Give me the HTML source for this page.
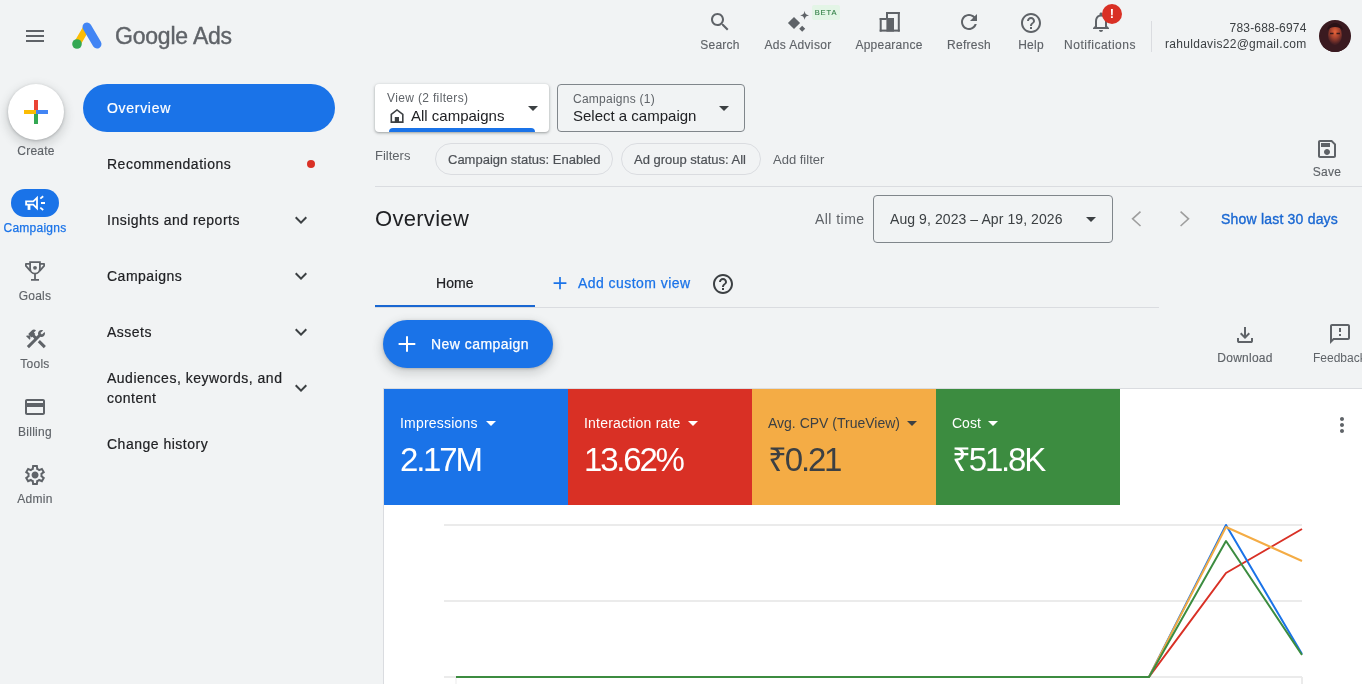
<!DOCTYPE html>
<html><head><meta charset="utf-8">
<style>
*{box-sizing:border-box;margin:0;padding:0}
html,body{width:1362px;height:684px;overflow:hidden;background:#f1f3f4;font-family:"Liberation Sans",sans-serif;color:#202124}
.a{position:absolute;white-space:nowrap}
.t12{font-size:12px;line-height:16px}
.t13{font-size:13px;line-height:16px}
.t14{font-size:14px;line-height:20px}
.t15{font-size:15px;line-height:20px}
.g{color:#5f6368}
svg{position:absolute;display:block}
.lbl{text-align:center;color:#5f6368;letter-spacing:.25px;-webkit-text-stroke:.15px currentColor}
.m{-webkit-text-stroke:.35px currentColor}
.nav{letter-spacing:.5px;color:#202124;-webkit-text-stroke:.2px #202124}
</style></head><body><div id="wrap" style="position:absolute;left:0;top:0;width:1362px;height:684px;will-change:transform">

<!-- ===== HEADER ===== -->
<svg style="left:23px;top:24px" width="24" height="24" viewBox="0 0 24 24"><path fill="#5f6368" d="M3 18h18v-2H3v2zm0-5h18v-2H3v2zm0-7v2h18V6H3z"/></svg>
<!-- logo -->
<svg style="left:70px;top:20px" width="36" height="32" viewBox="0 0 36 32">
  <line x1="7" y1="24" x2="17" y2="7" stroke="#fbbc04" stroke-width="7" stroke-linecap="round"/>
  <line x1="17" y1="7" x2="27" y2="24" stroke="#4285f4" stroke-width="9" stroke-linecap="round"/>
  <circle cx="7" cy="24" r="4.8" fill="#34a853"/>
</svg>
<div class="a g" style="left:115px;top:21.6px;font-size:23px;line-height:28px;-webkit-text-stroke:.4px #5f6368;letter-spacing:-.2px">Google Ads</div>

<!-- top icons -->
<svg style="left:708px;top:10px" width="24" height="24" viewBox="0 0 24 24"><path fill="#5f6368" d="M15.5 14h-.79l-.28-.27C15.410 12.59 16 11.11 16 9.5 16 5.91 13.09 3 9.5 3S3 5.91 3 9.5 5.91 16 9.5 16c1.61 0 3.09-.59 4.23-1.57l.27.28v.79l5 4.99L20.49 19l-4.99-5zm-6 0C7.01 14 5 11.99 5 9.5S7.01 5 9.5 5 14 7.01 14 9.5 11.99 14 9.5 14z"/></svg>
<div class="a t12 lbl" style="left:690px;width:60px;top:37px">Search</div>

<svg style="left:780px;top:0px" width="40" height="40" viewBox="780 0 40 40">
  <path fill="#5f6368" d="M794 16.9L800.1 23 794 29.1 787.9 23z"/>
  <path fill="#5f6368" d="M804.6 10.8C805.1 13.9 806 14.9 809.2 15.4 806 15.9 805.1 16.9 804.6 20 804.1 16.9 803.2 15.9 800 15.4 803.2 14.9 804.1 13.9 804.6 10.8z"/>
  <path fill="#5f6368" d="M802.2 25.8L805.2 28.8 802.2 31.8 799.2 28.8z"/>
</svg>
<div class="a" style="left:812px;top:5px;width:28px;height:15px;background:#e3f5e6;border-radius:2px;color:#2e7d43;font-size:7.5px;line-height:15px;text-align:center;letter-spacing:.9px;-webkit-text-stroke:.1px #2e7d43">BETA</div>
<div class="a t12 lbl" style="left:748px;width:100px;top:37px;letter-spacing:.35px">Ads Advisor</div>

<svg style="left:870px;top:0px" width="40" height="40" viewBox="870 0 40 40"><g fill="#5f6368">
  <rect x="879.7" y="18" width="2" height="13.6"/><rect x="879.7" y="18" width="7" height="2"/>
  <rect x="879.7" y="29.6" width="20.1" height="2"/><rect x="886.4" y="18" width="7.6" height="13.6"/>
  <rect x="886" y="12" width="13.8" height="2"/><rect x="886" y="12" width="2" height="7"/>
  <rect x="897.8" y="12" width="2" height="19.6"/></g></svg>
<div class="a t12 lbl" style="left:849px;width:80px;top:37px">Appearance</div>

<svg style="left:957px;top:10px" width="24" height="24" viewBox="0 0 24 24"><path fill="#5f6368" d="M17.65 6.35C16.2 4.9 14.21 4 12 4c-4.420 0-7.99 3.58-7.99 8s3.57 8 7.99 8c3.73 0 6.84-2.55 7.73-6h-2.08c-.82 2.33-3.04 4-5.65 4-3.31 0-6-2.690-6-6s2.69-6 6-6c1.66 0 3.14.69 4.22 1.78L13 11h7V4l-2.35 2.35z"/></svg>
<div class="a t12 lbl" style="left:929px;width:80px;top:37px">Refresh</div>

<svg style="left:1019px;top:11px" width="24" height="24" viewBox="0 0 24 24"><path fill="#5f6368" d="M11 18h2v-2h-2v2zm1-16C6.48 2 2 6.48 2 12s4.48 10 10 10 10-4.48 10-10S17.52 2 12 2zm0 18c-4.41 0-8-3.59-8-8s3.59-8 8-8 8 3.59 8 8-3.59 8-8 8zm0-14c-2.21 0-4 1.79-4 4h2c0-1.1.9-2 2-2s2 .9 2 2c0 2-3 1.75-3 5h2c0-2.25 3-2.5 3-5 0-2.21-1.79-4-4-4z"/></svg>
<div class="a t12 lbl" style="left:1001px;width:60px;top:37px">Help</div>

<svg style="left:1089px;top:10px" width="24" height="24" viewBox="0 0 24 24"><path fill="#5f6368" d="M12 22c1.1 0 2-.9 2-2h-4c0 1.1.89 2 2 2zm6-6v-5c0-3.07-1.64-5.64-4.5-6.32V4c0-.83-.67-1.5-1.5-1.5s-1.5.67-1.5 1.5v.68C7.63 5.36 6 7.92 6 11v5l-2 2v1h16v-1l-2-2zm-2 1H8v-6c0-2.48 1.51-4.5 4-4.5s4 2.02 4 4.5v6z"/></svg>
<div class="a" style="left:1102px;top:4px;width:20px;height:20px;border-radius:50%;background:#d93025;color:#fff;font-size:13px;line-height:20px;text-align:center;font-weight:700">!</div>
<div class="a t12 lbl" style="left:1050px;width:100px;top:37px;letter-spacing:.5px">Notifications</div>

<div class="a" style="left:1151px;top:21px;width:1px;height:31px;background:#dadce0"></div>
<div class="a t12" style="right:55.5px;top:19.6px;color:#3c4043;text-align:right;letter-spacing:.18px">783-688-6974</div>
<div class="a t12" style="right:55.5px;top:36.1px;color:#3c4043;text-align:right;letter-spacing:.3px">rahuldavis22@gmail.com</div>
<svg style="left:1319px;top:20px" width="32" height="32" viewBox="0 0 32 32">
  <defs><radialGradient id="fc" cx="50%" cy="35%" r="60%"><stop offset="0" stop-color="#e8643a"/><stop offset=".5" stop-color="#a8432e"/><stop offset="1" stop-color="#4a2024"/></radialGradient>
  <clipPath id="av"><circle cx="16" cy="16" r="16"/></clipPath></defs>
  <g clip-path="url(#av)"><rect width="32" height="32" fill="#3a1a20"/>
  <ellipse cx="16" cy="15" rx="7" ry="10" fill="url(#fc)"/>
  <path d="M8 10c1-5 5-7 8-7s7 2 8 7c-2-2-5-3-8-3s-6 1-8 3z" fill="#2a1216"/>
  <path d="M11 13.5h3.5M17.5 13.5h3.5" stroke="#3a1a1a" stroke-width="1.3"/>
  <rect x="0" y="26" width="32" height="6" fill="#3a1a20"/></g></svg>

<!-- ===== LEFT RAIL ===== -->
<div class="a" style="left:8px;top:84px;width:56px;height:56px;border-radius:50%;background:#fff;box-shadow:0 1px 3px rgba(60,64,67,.3),0 4px 8px 3px rgba(60,64,67,.15)"></div>
<div class="a" style="left:34px;top:100px;width:4px;height:12px;background:#ea4335"></div>
<div class="a" style="left:34px;top:112px;width:4px;height:12px;background:#34a853"></div>
<div class="a" style="left:24px;top:110px;width:12px;height:4px;background:#fbbc04"></div>
<div class="a" style="left:36px;top:110px;width:12px;height:4px;background:#4285f4"></div>
<div class="a t12 lbl" style="left:0;width:72px;top:142.6px">Create</div>

<div class="a" style="left:11px;top:189px;width:48px;height:28px;border-radius:14px;background:#1a73e8"></div>
<svg style="left:10px;top:186px" width="50" height="34" viewBox="10 186 50 34"><g stroke="#fff" fill="none" stroke-width="1.8">
<path d="M26.1 201.3H33.3L37 197.9V208.4L33.3 204.6H26.1Z" stroke-linejoin="miter"/>
<path d="M40.3 198.6L43.2 196.2M41 203H45M40.3 207.6L43.2 210"/></g>
<rect x="27.6" y="204.5" width="2.8" height="5.4" fill="#fff"/></svg>
<div class="a t12 lbl m" style="left:0;width:70px;top:220px;color:#1a73e8;-webkit-text-stroke-width:.25px">Campaigns</div>

<svg style="left:20px;top:256px" width="30" height="30" viewBox="20 256 30 30"><g fill="none" stroke="#5f6368" stroke-width="1.8">
<path d="M30.1 262.1H39.9V268.6C39.9 271.5 37.7 273.7 35 273.7S30.1 271.5 30.1 268.6Z"/>
<path d="M30.1 263.9H25.9V265.9L30.3 270.9M39.9 263.9H44.1V265.9L39.7 270.9" stroke-linejoin="round"/>
<path d="M35 273.5V279.2M31 279.9H39"/></g><circle cx="35" cy="267.8" r="1.9" fill="#5f6368"/></svg>
<div class="a t12 lbl" style="left:0;width:70px;top:287.5px">Goals</div>

<svg style="left:23.6px;top:327px" width="24" height="24" viewBox="0 0 24 24"><path fill="#5f6368" d="M13.783 15.172l2.121-2.121 5.996 5.996-2.121 2.121zM17.5 10c1.93 0 3.5-1.57 3.5-3.5 0-.58-.16-1.12-.41-1.6l-2.7 2.7-1.49-1.49 2.7-2.7c-.48-.25-1.02-.41-1.6-.41C15.57 3 14 4.57 14 6.5c0 .41.08.8.21 1.16l-1.85 1.85-1.78-1.78.71-.71-1.41-1.41L12 3.49c-1.17-1.170-3.07-1.17-4.24 0L4.22 7.03l1.41 1.41H2.81l-.71.71 3.54 3.54.71-.71V9.15l1.41 1.41.71-.71 1.78 1.78-7.41 7.41 2.12 2.12L16.34 9.79c.36.13.75.21 1.16.21z"/></svg>
<div class="a t12 lbl" style="left:0;width:70px;top:356px">Tools</div>

<svg style="left:23px;top:395px" width="24" height="24" viewBox="0 0 24 24"><path fill="#5f6368" d="M20 4H4c-1.11 0-1.99.89-1.99 2L2 18c0 1.11.89 2 2 2h16c1.11 0 2-.89 2-2V6c0-1.11-.89-2-2-2zm0 14H4v-6h16v6zm0-10H4V6h16v2z"/></svg>
<div class="a t12 lbl" style="left:0;width:70px;top:423.7px">Billing</div>

<svg style="left:23px;top:462.8px" width="24" height="24" viewBox="0 -960 960 960"><path fill="#5f6368" d="m370-80-16-128q-13-5-24.5-12T307-235l-119 50L78-375l103-78q-1-7-1-13.5v-27q0-6.5 1-13.5L78-585l110-190 119 50q11-8 23-15t24-12l16-128h220l16 128q13 5 24.5 12t22.5 15l119-50 110 190-103 78q1 7 1 13.5v27q0 6.5-2 13.5l103 78-110 190-118-50q-11 8-23 15t-24 12L590-80H370Zm70-80h79l14-106q31-8 57.5-23.5T639-327l99 41 39-68-86-65q5-14 7-29.5t2-31.5q0-16-2-31.5t-7-29.5l86-65-39-68-99 42q-22-23-48.5-38.5T533-694l-13-106h-79l-14 106q-31 8-57.5 23.5T321-633l-99-41-39 68 86 64q-5 15-7 30t-2 32q0 16 2 31t7 30l-86 65 39 68 99-42q22 23 48.5 38.5T427-266l13 106Zm42-180q58 0 99-41t41-99q0-58-41-99t-99-41q-59 0-99.5 41T342-480q0 58 40.5 99t99.5 41Zm-2-140Z"/></svg>
<div class="a t12 lbl" style="left:0;width:70px;top:491.2px">Admin</div>

<!-- ===== NAV PANEL ===== -->
<div class="a" style="left:83px;top:84px;width:252px;height:48px;border-radius:24px;background:#1a73e8"></div>
<div class="a t14 m" style="left:107px;top:98.15px;color:#fff;letter-spacing:.7px;-webkit-text-stroke-width:.22px">Overview</div>
<div class="a t14 nav" style="left:107px;top:154.35px">Recommendations</div>
<div class="a" style="left:307px;top:160px;width:8px;height:8px;border-radius:50%;background:#d93025"></div>
<div class="a t14 nav" style="left:107px;top:210.15px">Insights and reports</div>
<div class="a t14 nav" style="left:107px;top:265.85px">Campaigns</div>
<div class="a t14 nav" style="left:107px;top:321.95px">Assets</div>
<div class="a t14 nav" style="left:107px;top:367.95px">Audiences, keywords, and<br>content</div>
<div class="a t14 nav" style="left:107px;top:434.15px">Change history</div>
<svg style="left:289px;top:208px" width="24" height="24" viewBox="0 0 24 24"><path fill="#3c4043" d="M16.59 8.59L12 13.17 7.41 8.59 6 10l6 6 6-6z"/></svg>
<svg style="left:289px;top:264px" width="24" height="24" viewBox="0 0 24 24"><path fill="#3c4043" d="M16.59 8.59L12 13.17 7.41 8.59 6 10l6 6 6-6z"/></svg>
<svg style="left:289px;top:320px" width="24" height="24" viewBox="0 0 24 24"><path fill="#3c4043" d="M16.59 8.59L12 13.17 7.41 8.59 6 10l6 6 6-6z"/></svg>
<svg style="left:289px;top:376px" width="24" height="24" viewBox="0 0 24 24"><path fill="#3c4043" d="M16.59 8.59L12 13.17 7.41 8.59 6 10l6 6 6-6z"/></svg>

<!-- ===== MAIN ===== -->
<div class="a" style="left:375px;top:84px;width:174px;height:48px;background:#fff;border-radius:4px;box-shadow:0 1px 2px rgba(60,64,67,.3),0 1px 3px 1px rgba(60,64,67,.15);overflow:hidden">
  <div class="a" style="left:14px;bottom:0;width:146px;height:4px;background:#1a73e8;border-radius:4px 4px 0 0"></div>
</div>
<div class="a t12" style="left:387px;top:90.1px;color:#5f6368;letter-spacing:.35px">View (2 filters)</div>
<svg style="left:380px;top:100px" width="30" height="30" viewBox="380 100 30 30"><path d="M391.3 114.3L397 109.9 402.8 114.3V122.1H391.3z" fill="none" stroke="#3c4043" stroke-width="1.6" stroke-linejoin="miter"/><rect x="394.8" y="117" width="4.2" height="5.5" fill="#3c4043"/></svg>
<div class="a t15" style="left:411px;top:105.5px">All campaigns</div>
<svg style="left:521px;top:96px" width="24" height="24" viewBox="0 0 24 24"><path fill="#3c4043" d="M7 10l5 5 5-5z"/></svg>

<div class="a" style="left:557px;top:84px;width:188px;height:48px;border:1px solid #80868b;border-radius:4px"></div>
<div class="a t12" style="left:573px;top:90.8px;color:#5f6368;letter-spacing:.25px">Campaigns (1)</div>
<div class="a t15" style="left:573px;top:105.5px">Select a campaign</div>
<svg style="left:712px;top:96px" width="24" height="24" viewBox="0 0 24 24"><path fill="#3c4043" d="M7 10l5 5 5-5z"/></svg>

<div class="a t13 g" style="left:375px;top:147.5px">Filters</div>
<div class="a" style="left:435px;top:143px;width:178px;height:32px;border:1px solid #dadce0;border-radius:16px"></div>
<div class="a t13" style="left:448px;top:152.2px;color:#4d5156;-webkit-text-stroke:.2px #4d5156">Campaign status: Enabled</div>
<div class="a" style="left:621px;top:143px;width:140px;height:32px;border:1px solid #dadce0;border-radius:16px"></div>
<div class="a t13" style="left:634px;top:152.2px;color:#4d5156;-webkit-text-stroke:.2px #4d5156">Ad group status: All</div>
<div class="a t13 g" style="left:773px;top:152.2px">Add filter</div>

<svg style="left:1315px;top:137px" width="24" height="24" viewBox="0 0 24 24"><path fill="#5f6368" d="M17 3H5c-1.11 0-2 .9-2 2v14c0 1.1.89 2 2 2h14c1.1 0 2-.9 2-2V7l-4-4zm2 16H5V5h11.17L19 7.830V19zm-7-7c-1.66 0-3 1.34-3 3s1.34 3 3 3 3-1.34 3-3-1.34-3-3-3zM6 6h9v4H6z"/></svg>
<div class="a t12 lbl" style="left:1297px;width:60px;top:164.4px">Save</div>
<div class="a" style="left:375px;top:186px;width:987px;height:1px;background:#dadce0"></div>

<div class="a" style="left:375px;top:204.7px;font-size:22px;line-height:28px;letter-spacing:.3px">Overview</div>
<div class="a t14 g" style="left:815px;top:209.15px;letter-spacing:.45px">All time</div>
<div class="a" style="left:873px;top:195px;width:240px;height:48px;border:1px solid #80868b;border-radius:4px"></div>
<div class="a t14" style="left:890px;top:209.15px;color:#3c4043;letter-spacing:.08px">Aug 9, 2023 – Apr 19, 2026</div>
<svg style="left:1079px;top:207px" width="24" height="24" viewBox="0 0 24 24"><path fill="#3c4043" d="M7 10l5 5 5-5z"/></svg>
<svg style="left:1120px;top:200px" width="80" height="35" viewBox="1120 200 80 35"><path d="M1140.5 211.6L1132.6 218.8 1140.5 226M1180.6 211.6L1188.5 218.8 1180.6 226" fill="none" stroke="#9e9e9e" stroke-width="1.6"/></svg>

<div class="a t14 m" style="left:1221px;top:209.15px;color:#1967d2;letter-spacing:.2px">Show last 30 days</div>

<!-- tabs -->
<div class="a" style="left:375px;top:307px;width:784px;height:1px;background:#dadce0"></div>
<div class="a" style="left:375px;top:305px;width:160px;height:2px;background:#1967d2"></div>
<div class="a t14 m" style="left:436px;top:272.55px;letter-spacing:.1px;-webkit-text-stroke-width:.2px">Home</div>
<svg style="left:548px;top:271px" width="24" height="24" viewBox="548 271 24 24"><path d="M560 276.9v12.4M553.6 283.1h12.8" stroke="#1a73e8" stroke-width="1.7"/></svg>
<div class="a t14 m" style="left:578px;top:273.15px;color:#1a73e8;letter-spacing:.45px;-webkit-text-stroke-width:.25px">Add custom view</div>
<svg style="left:711px;top:272px" width="24" height="24" viewBox="0 0 24 24"><path fill="#3c4043" d="M11 18h2v-2h-2v2zm1-16C6.48 2 2 6.48 2 12s4.48 10 10 10 10-4.48 10-10S17.52 2 12 2zm0 18c-4.41 0-8-3.59-8-8s3.59-8 8-8 8 3.59 8 8-3.59 8-8 8zm0-14c-2.21 0-4 1.79-4 4h2c0-1.1.9-2 2-2s2 .9 2 2c0 2-3 1.75-3 5h2c0-2.25 3-2.5 3-5 0-2.21-1.79-4-4-4z"/></svg>

<!-- new campaign -->
<div class="a" style="left:383px;top:320px;width:170px;height:48px;border-radius:24px;background:#1a73e8;box-shadow:0 1px 3px rgba(60,64,67,.3),0 4px 8px 3px rgba(60,64,67,.15)"></div>
<svg style="left:395px;top:332px" width="24" height="24" viewBox="395 332 24 24"><path d="M407 336.3v15.5M398.6 344h16.7" stroke="#fff" stroke-width="2"/></svg>
<div class="a t14 m" style="left:431px;top:334px;color:#fff;letter-spacing:.45px;-webkit-text-stroke-width:.25px">New campaign</div>

<svg style="left:1233px;top:323px" width="24" height="24" viewBox="0 0 24 24"><path fill="#5f6368" d="M12 16l-5-5 1.4-1.45 2.6 2.6V4h2v8.15l2.6-2.6L17 11zm-6 4q-.825 0-1.412-.587Q4 18.825 4 18v-3h2v3h12v-3h2v3q0 .825-.587 1.413Q18.825 20 18 20z"/></svg>
<div class="a t12 lbl" style="left:1205px;width:80px;top:349.6px">Download</div>
<svg style="left:1328px;top:322px" width="24" height="24" viewBox="0 0 24 24"><path fill="#5f6368" d="M20 2H4c-1.1 0-1.99.9-1.99 2L2 22l4-4h14c1.1 0 2-.9 2-2V4c0-1.1-.9-2-2-2zm0 14H5.17L4 17.17V4h16v12zM11 12h2v2h-2zm0-6h2v4h-2z"/></svg>
<div class="a t12 g" style="left:1313px;top:349.6px">Feedback</div>

<!-- ===== CARD ===== -->
<div class="a" style="left:383px;top:388px;width:979px;height:296px;background:#fff;border-top:1px solid #dadce0;border-left:1px solid #dadce0"></div>
<div class="a" style="left:384px;top:389px;width:184px;height:116px;background:#1a73e8"></div>
<div class="a" style="left:568px;top:389px;width:184px;height:116px;background:#d93025"></div>
<div class="a" style="left:752px;top:389px;width:184px;height:116px;background:#f4ac45"></div>
<div class="a" style="left:936px;top:389px;width:184px;height:116px;background:#3c8c40"></div>

<div class="a t14" style="left:400px;top:412.95px;color:#fff;letter-spacing:.2px">Impressions</div>
<svg style="left:479px;top:411px" width="24" height="24" viewBox="0 0 24 24"><path fill="#fff" d="M7 10l5 5 5-5z"/></svg>
<div class="a" style="left:400px;top:440.3px;color:#fff;font-size:33px;line-height:40px;letter-spacing:-2.2px">2.17M</div>

<div class="a t14" style="left:584px;top:412.95px;color:#fff;letter-spacing:.2px">Interaction rate</div>
<svg style="left:681px;top:411px" width="24" height="24" viewBox="0 0 24 24"><path fill="#fff" d="M7 10l5 5 5-5z"/></svg>
<div class="a" style="left:584px;top:440.3px;color:#fff;font-size:33px;line-height:40px;letter-spacing:-2.2px">13.62%</div>

<div class="a t14" style="left:768px;top:412.95px;color:#3c4043">Avg. CPV (TrueView)</div>
<svg style="left:900px;top:411px" width="24" height="24" viewBox="0 0 24 24"><path fill="#3c4043" d="M7 10l5 5 5-5z"/></svg>
<div class="a" style="left:768px;top:440.3px;color:#3c4043;font-size:33px;line-height:40px;letter-spacing:-2.2px">₹0.21</div>

<div class="a t14" style="left:952px;top:412.95px;color:#fff">Cost</div>
<svg style="left:981px;top:411px" width="24" height="24" viewBox="0 0 24 24"><path fill="#fff" d="M7 10l5 5 5-5z"/></svg>
<div class="a" style="left:952px;top:440.3px;color:#fff;font-size:33px;line-height:40px;letter-spacing:-2.2px">₹51.8K</div>

<svg style="left:1330px;top:413px" width="24" height="24" viewBox="0 0 24 24"><path fill="#5f6368" d="M12 8c1.1 0 2-.9 2-2s-.9-2-2-2-2 .9-2 2 .9 2 2 2zm0 2c-1.1 0-2 .9-2 2s.9 2 2 2 2-.9 2-2-.9-2-2-2zm0 6c-1.1 0-2 .9-2 2s.9 2 2 2 2-.9 2-2-.9-2-2-2z"/></svg>

<!-- chart -->
<svg style="left:0;top:0" width="1362" height="684" viewBox="0 0 1362 684">
  <g stroke="#ebebeb" stroke-width="2" fill="none">
    <line x1="444" y1="525" x2="1302" y2="525"/>
    <line x1="444" y1="601" x2="1302" y2="601"/>
    <line x1="444" y1="677" x2="1302" y2="677"/>
    <line x1="1302" y1="677" x2="1302" y2="684"/>
  </g>
  <g fill="none" stroke-width="2" stroke-linejoin="round">
    <polyline stroke="#d93025" points="456,677 1149,677 1226,573 1302,529"/>
    <polyline stroke="#1a73e8" points="456,677 1149,677 1226,525 1302,654"/>
    <polyline stroke="#f4ac45" points="456,677 1149,677 1226,527 1302,561"/>
    <polyline stroke="#3c8c40" points="456,677 1149,677 1226,541 1302,655"/>
  </g>
  <line x1="456" y1="678" x2="456" y2="684" stroke="#ebebeb" stroke-width="1"/>
</svg>

</div></body></html>
